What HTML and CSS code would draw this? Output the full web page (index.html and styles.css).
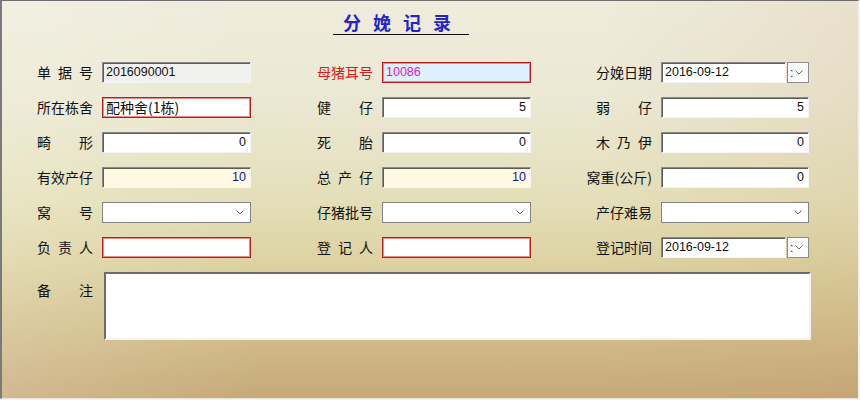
FILE: index.html
```html
<!DOCTYPE html>
<html lang="zh-CN">
<head>
    <meta charset="UTF-8">
    <title>分娩记录</title>
    <link rel="stylesheet" href="styles.css">
</head>
<body>
    <div class="window">
        <h1 class="title">分娩记录</h1>

        <div class="form">
            <!-- row 1 -->
            <div class="field"><span class="lbl">单据号</span><div class="box readonly">2016090001</div></div>
            <div class="field"><span class="lbl red">母猪耳号</span><div class="box alert ear">10086</div></div>
            <div class="field col3"><span class="lbl">分娩日期</span>
                <div class="date">
                    <div class="box">2016-09-12</div>
                    <div class="spin">:<svg width="8" height="5" viewBox="0 0 8 5"><path d="M0.5 0.5 L4 4 L7.5 0.5" fill="none" stroke="#6a6a6a"/></svg></div>
                </div>
            </div>

            <!-- row 2 -->
            <div class="field"><span class="lbl">所在栋舍</span><div class="box alert cn">配种舍(1栋)</div></div>
            <div class="field"><span class="lbl">健仔</span><div class="box num">5</div></div>
            <div class="field col3"><span class="lbl">弱仔</span><div class="box num">5</div></div>

            <!-- row 3 -->
            <div class="field"><span class="lbl">畸形</span><div class="box num">0</div></div>
            <div class="field"><span class="lbl">死胎</span><div class="box num">0</div></div>
            <div class="field col3"><span class="lbl">木乃伊</span><div class="box num">0</div></div>

            <!-- row 4 -->
            <div class="field"><span class="lbl">有效产仔</span><div class="box num sum">10</div></div>
            <div class="field"><span class="lbl">总产仔</span><div class="box num sum">10</div></div>
            <div class="field col3"><span class="lbl wide">窝重(公斤)</span><div class="box num">0</div></div>

            <!-- row 5 -->
            <div class="field"><span class="lbl">窝号</span><div class="combo"><svg width="8" height="5" viewBox="0 0 8 5"><path d="M0.5 0.5 L4 4 L7.5 0.5" fill="none" stroke="#6a6a6a"/></svg></div></div>
            <div class="field"><span class="lbl">仔猪批号</span><div class="combo"><svg width="8" height="5" viewBox="0 0 8 5"><path d="M0.5 0.5 L4 4 L7.5 0.5" fill="none" stroke="#6a6a6a"/></svg></div></div>
            <div class="field col3"><span class="lbl">产仔难易</span><div class="combo"><svg width="8" height="5" viewBox="0 0 8 5"><path d="M0.5 0.5 L4 4 L7.5 0.5" fill="none" stroke="#6a6a6a"/></svg></div></div>

            <!-- row 6 -->
            <div class="field"><span class="lbl">负责人</span><div class="box alert"></div></div>
            <div class="field"><span class="lbl">登记人</span><div class="box alert"></div></div>
            <div class="field col3"><span class="lbl">登记时间</span>
                <div class="date">
                    <div class="box">2016-09-12</div>
                    <div class="spin">:<svg width="8" height="5" viewBox="0 0 8 5"><path d="M0.5 0.5 L4 4 L7.5 0.5" fill="none" stroke="#6a6a6a"/></svg></div>
                </div>
            </div>
        </div>

        <div class="note-row">
            <span class="lbl">备注</span>
            <div class="note"></div>
        </div>
    </div>
</body>
</html>
```

FILE: styles.css
```css
body {
    margin: 0;
    background-color: #f4f4f4;
    font-family: "Noto Sans CJK SC", sans-serif;
}

.window {
    width: 856px;
    height: 397px;
    border-top: 1px solid #6e6e6e;
    border-left: 2px solid #7a7a7a;
    border-right: 1px solid #f6f2ea;
    border-bottom: 1px solid #e8e4dc;
    background:
        linear-gradient(90deg, rgba(255, 255, 245, 0.18), rgba(255, 255, 245, 0) 30%, rgba(255, 255, 245, 0) 70%, rgba(190, 140, 90, 0.12)),
        linear-gradient(180deg, #efecdd 0%, #ebe8d3 25%, #e4dfb9 50%, #ddd3a4 65%, #d2bf8c 82%, #c7a979 100%);
}

/* Title */
.title {
    width: 126px;
    margin: 11px 0 0 331px;
    padding: 0 0 2px 10px;
    border-bottom: 1px solid #101010;
    font-size: 18px;
    line-height: 20px;
    font-weight: bold;
    letter-spacing: 12px;
    color: #2424c8;
}

/* Form grid */
.form {
    display: grid;
    grid-template-columns: 280px 279px 213px;
    grid-auto-rows: 21px;
    row-gap: 14px;
    margin: 27px 0 0 35px;
}

.field {
    display: flex;
    align-items: center;
    justify-content: flex-end;
    gap: 9px;
    width: 214px;
}

.field.col3 {
    width: 213px;
}

.lbl {
    flex: none;
    width: 56px;
    font-size: 14px;
    line-height: 21px;
    color: #111;
    white-space: nowrap;
    text-align: justify;
    text-align-last: justify;
}

.lbl.red {
    color: #d41c1c;
}

.lbl.wide {
    width: auto;
    text-align-last: auto;
}

/* Text boxes */
.box {
    flex: none;
    box-sizing: border-box;
    width: 149px;
    height: 21px;
    padding: 0 3px;
    border: 1px solid;
    border-color: #8a8a8a #f6f6f6 #f6f6f6 #8a8a8a;
    box-shadow: inset 1px 1px 0 #5c5c5c;
    background-color: #fff;
    font-family: "Liberation Sans", "Noto Sans CJK SC", sans-serif;
    font-size: 12.5px;
    line-height: 19px;
    color: #111;
    white-space: nowrap;
}

.col3 .box {
    width: 148px;
}

.box.readonly {
    background-color: #f1f1f0;
}

.box.num {
    text-align: right;
    padding-right: 4px;
}

.box.sum {
    background-color: #fdf9e3;
    color: #14149a;
}

.box.alert {
    border: 1px solid #b81c1c;
    box-shadow: 0 0 0 1px #e88a8a inset;
}

.box.ear {
    background-color: #dfeffb;
    color: #d024d0;
}

.box.cn {
    font-family: "Noto Sans CJK SC", sans-serif;
    font-size: 14px;
}

/* Date picker */
.date {
    display: flex;
    gap: 1px;
    width: 148px;
}

.date .box {
    width: 125px;
}

.spin {
    box-sizing: border-box;
    display: flex;
    align-items: center;
    gap: 2px;
    width: 22px;
    height: 21px;
    padding-left: 2px;
    border: 1px solid #8c8c8c;
    background-color: #fbfbfb;
    font-family: "Liberation Sans", sans-serif;
    font-size: 12px;
    color: #222;
}

/* Combo boxes */
.combo {
    flex: none;
    box-sizing: border-box;
    display: flex;
    align-items: center;
    justify-content: flex-end;
    width: 149px;
    height: 21px;
    padding-right: 6px;
    border: 1px solid #858585;
    background-color: #fff;
}

.col3 .combo {
    width: 148px;
}

/* Remarks */
.note-row {
    display: flex;
    align-items: flex-start;
    gap: 11px;
    margin: 14px 0 0 35px;
}

.note-row .lbl {
    padding-top: 8px;
}

.note {
    box-sizing: border-box;
    width: 707px;
    height: 68px;
    border: 2px solid;
    border-color: #6c6c6c #f2f2f2 #f2f2f2 #6c6c6c;
    background-color: #fff;
}
```
